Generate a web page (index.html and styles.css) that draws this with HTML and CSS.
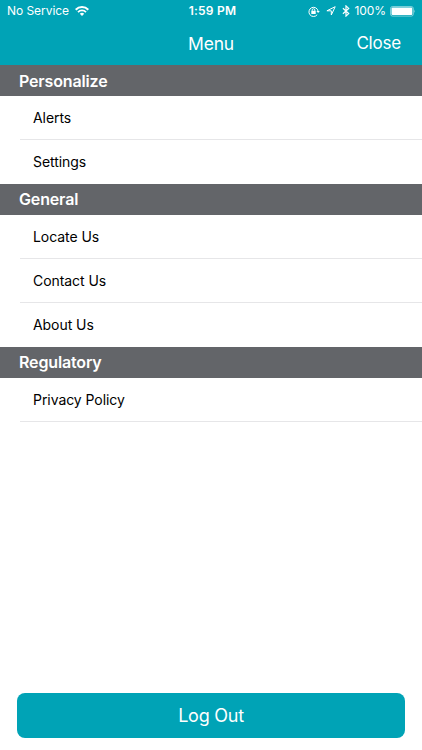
FILE: index.html
```html
<!DOCTYPE html>
<html lang="en">
<head>
    <meta charset="UTF-8">
    <title>Menu</title>
    <link rel="stylesheet" href="styles.css">
</head>
<body>
    <div class="screen">
        <div class="status-bar">
            <div class="status-left">
                <span class="carrier">No Service</span>
                <svg class="wifi" width="14" height="10" viewBox="0 0 14 10">
                    <path d="M0.7 3.7 A8.8 8.8 0 0 1 13.3 3.7" fill="none" stroke="#fff" stroke-width="2"/>
                    <path d="M3 6.1 A5.6 5.6 0 0 1 11 6.1" fill="none" stroke="#fff" stroke-width="1.8"/>
                    <path d="M7 10 L4.8 7.8 A3.1 3.1 0 0 1 9.2 7.8 Z" fill="#fff"/>
                </svg>
            </div>
            <span class="time">1:59 PM</span>
            <div class="status-right">
                <svg class="lock" width="12" height="11" viewBox="0 0 12 11" fill="none" stroke="#fff">
                    <path d="M9.2 8.7 A4.6 4.6 0 1 1 10.1 5.2" stroke-width="1"/>
                    <path d="M8.4 5 H11.8 L10.1 7.1 Z" fill="#fff" stroke="none"/>
                    <rect x="3.3" y="4.8" width="4.4" height="3.2" fill="#fff" stroke="none"/>
                    <path d="M4.2 5 V4 A1.3 1.3 0 0 1 6.8 4 V5" stroke-width="0.9"/>
                </svg>
                <svg class="location" width="10" height="10" viewBox="0 0 10 10">
                    <path d="M9.2 0.7 L5.3 9 V4.8 H0.9 Z" fill="none" stroke="#fff" stroke-width="1" stroke-linejoin="round"/>
                </svg>
                <svg class="bluetooth" width="8" height="12" viewBox="0 0 8 12">
                    <path d="M0.9 3.3 L6.7 8.6 L4 11.1 V0.9 L6.7 3.4 L0.9 8.7" fill="none" stroke="#fff" stroke-width="1.2"/>
                </svg>
                <span class="percent">100%</span>
                <svg class="battery" width="26" height="11" viewBox="0 0 26 11">
                    <rect x="0.5" y="0.5" width="22.8" height="9.6" rx="2" fill="none" stroke="#fff" stroke-opacity="0.6" stroke-width="0.8"/>
                    <rect x="1.5" y="1.5" width="20.8" height="7.6" rx="1" fill="#fff"/>
                    <path d="M24.3 3.6 Q25.7 5.3 24.3 7 Z" fill="#fff" fill-opacity="0.6"/>
                </svg>
            </div>
        </div>

        <div class="nav-bar">
            <span class="nav-title">Menu</span>
            <a class="nav-close">Close</a>
        </div>

        <div class="menu">
            <h2 class="section"><span>Personalize</span></h2>
            <ul class="items">
                <li><span>Alerts</span></li>
                <li><span>Settings</span></li>
            </ul>
            <h2 class="section"><span>General</span></h2>
            <ul class="items">
                <li><span>Locate Us</span></li>
                <li><span>Contact Us</span></li>
                <li><span>About Us</span></li>
            </ul>
            <h2 class="section"><span>Regulatory</span></h2>
            <ul class="items last">
                <li><span>Privacy Policy</span></li>
            </ul>
        </div>

        <button class="logout">Log Out</button>
    </div>
</body>
</html>
```

FILE: styles.css
```css
* { box-sizing: border-box; }
body { margin: 0; background: #fff; font-family: Inter, "Liberation Sans", sans-serif; }
.screen { width: 422px; height: 750px; display: flex; flex-direction: column; overflow: hidden; }

/* top bars */
.status-bar { display: grid; grid-template-columns: 1fr auto 1fr; align-items: center; height: 22px; padding: 0 6px 0 7px; background: #00a3b6; color: #fff; font-size: 12px; line-height: 22px; }
.status-left, .status-right { display: flex; align-items: center; }
.status-right { justify-content: flex-end; }
.carrier { letter-spacing: -0.05px; }
.wifi { margin-left: 6px; }
.time { padding-left: 2px; font-weight: 600; letter-spacing: 0.2px; }
.location { margin-left: 6px; }
.bluetooth { margin-left: 6px; }
.percent { margin-left: 5px; letter-spacing: -0.1px; }
.battery { margin-left: 4px; }
.nav-bar { display: grid; grid-template-columns: 1fr auto 1fr; height: 43.5px; background: #00a3b6; color: #fff; line-height: 43px; }
.nav-title { grid-column: 2; font-size: 17.5px; letter-spacing: -0.2px; }
.nav-close { justify-self: end; padding-right: 21px; font-size: 17px; letter-spacing: -0.2px; }

/* menu list */
.menu { margin-top: -0.5px; }
.section { height: 31px; margin: 0; padding-left: 19px; background: #636569; color: #fff; font-size: 16px; font-weight: 600; letter-spacing: -0.15px; line-height: 32px; }
.section:not(:first-child) { line-height: 31px; }
.items { margin: 0; padding: 0 0 0 20px; list-style: none; }
.items li { height: 44px; padding-left: 13px; border-bottom: 1px solid #e6e6e8; font-size: 14px; letter-spacing: -0.06px; line-height: 44px; }
.items li:last-child { border-bottom: none; }
.items.last li { border-bottom: 1px solid #e6e6e8; }

.logout { height: 45px; margin: auto 17px 12px 17px; padding: 0 0 1px; border: none; border-radius: 8px; background: #00a3b6; color: #fff; font-family: inherit; font-size: 18px; letter-spacing: -0.25px; }
```
